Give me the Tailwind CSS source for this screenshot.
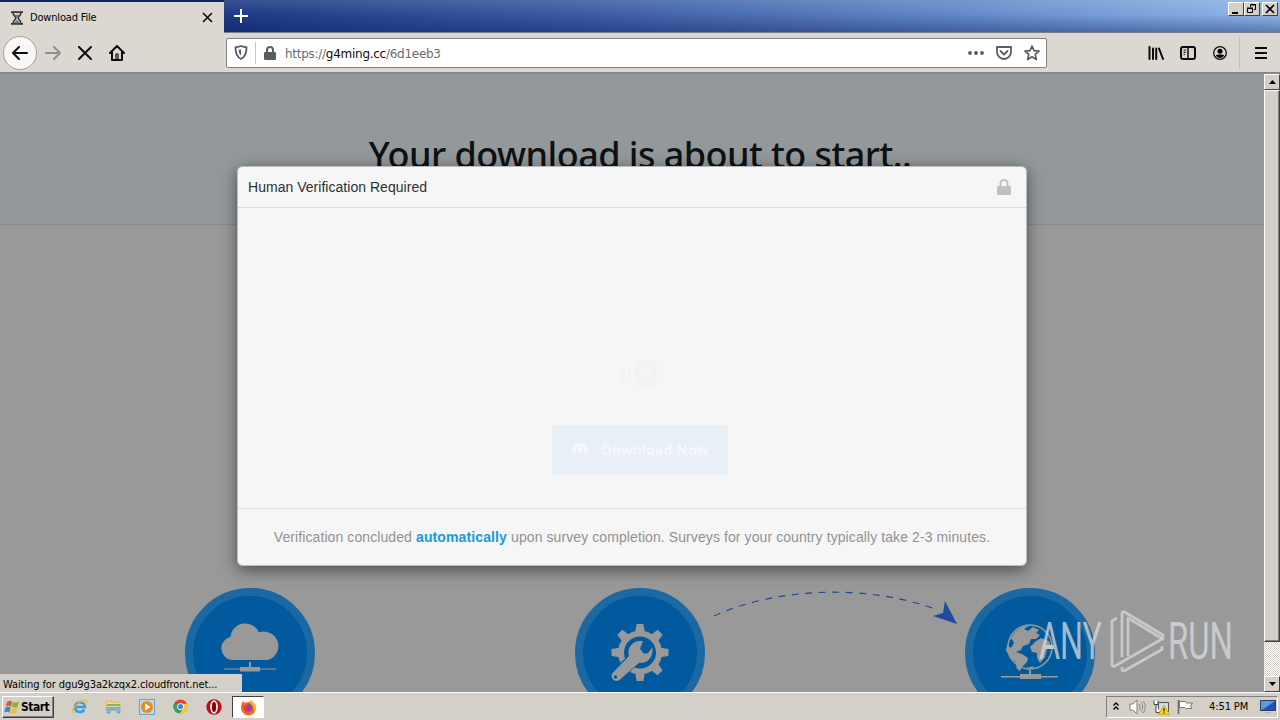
<!DOCTYPE html>
<html lang="en">
<head>
    <meta charset="UTF-8">
    <meta name="viewport" content="width=device-width, initial-scale=1.0">
    <title>Download File</title>
    <script src="https://cdn.jsdelivr.net/npm/@tailwindcss/browser@4"></script>
</head>
<body class="w-[1280px] h-[720px] overflow-hidden flex flex-col bg-[#d4d0c8] font-['DejaVu_Sans_Condensed','DejaVu_Sans',sans-serif] text-[11px] text-black">

    <!-- Tab strip -->
    <header class="h-[33px] shrink-0 flex items-start border-b border-[#7d7f88] bg-[linear-gradient(to_bottom,rgba(255,255,255,0.12),rgba(255,255,255,0)_45%,rgba(10,25,90,0.38)),linear-gradient(to_right,#0a246a,#1f3d86_20%,#3a5ba2_45%,#6389c8_75%,#8fb6e8)]">
        <div class="w-[224px] h-[33px] border-t-2 border-[#0a246a] bg-[#dbd8d1] flex items-center pl-[10px] pr-[11px] shrink-0">
            <svg class="w-[14px] h-[14px]" viewBox="0 0 14 14" fill="none" stroke="#333">
                <path d="M1 1.2h12M1 12.8h12" stroke-width="1.8"/>
                <path d="M3 1.5c0 3 2.9 4 2.9 5.500S3 9.500 3 12.500M11 1.500c0 3-2.900 4-2.900 5.500S11 9.500 11 12.500" stroke-width="1.500"/>
                <path d="M5 4h4L7 7zM4.500 12L7 9l2.500 3z" fill="#777" stroke="#777" stroke-width=".5"/>
            </svg>
            <span class="ml-[6px] pt-[2px] grow whitespace-nowrap tracking-[-0.18px]">Download File</span>
            <svg class="w-[11px] h-[11px]" viewBox="0 0 11 11" stroke="#111" stroke-width="1.700"><path d="M1 1l9 9M10 1l-9 9"/></svg>
        </div>
        <svg class="w-[14px] h-[14px] mt-[9px] ml-[10px]" viewBox="0 0 14 14" stroke="#fff" stroke-width="2"><path d="M7 0v14M0 7h14"/></svg>
        <div class="grow"></div>
        <!-- Window buttons -->
        <div class="flex mt-[2px] mr-[2px]">
            <div class="w-[16px] h-[14px] bg-[#d4d0c8] border border-t-white border-l-white border-r-[#404040] border-b-[#404040]">
                <svg class="w-[14px] h-[12px]" viewBox="0 0 14 12"><path d="M3 9h6v2H3z"/></svg>
            </div>
            <div class="w-[16px] h-[14px] bg-[#d4d0c8] border border-t-white border-l-white border-r-[#404040] border-b-[#404040]">
                <svg class="w-[14px] h-[12px]" viewBox="0 0 14 12" fill="none" stroke="#000"><path d="M5.500 4V1.500h5v5H9M5 2h6M2.500 5.500h5v4h-5zM2 5h6"/></svg>
            </div>
            <div class="ml-[2px] w-[16px] h-[14px] bg-[#d4d0c8] border border-t-white border-l-white border-r-[#404040] border-b-[#404040]">
                <svg class="w-[14px] h-[12px]" viewBox="0 0 14 12" stroke="#000" stroke-width="1.600"><path d="M3 2l8 8M11 2l-8 8"/></svg>
            </div>
        </div>
    </header>

    <!-- Navigation toolbar -->
    <nav class="h-[41px] shrink-0 flex items-center bg-[#dbd8d1] border-b-2 border-[#85878a]">
        <div class="ml-[3px] w-[34px] h-[34px] rounded-full bg-[#f9f8f7] border border-[#a3a09b] flex items-center justify-center shrink-0">
            <svg class="w-[16px] h-[14px]" viewBox="0 0 16 14" fill="none" stroke="#0c0c0d" stroke-width="2" stroke-linecap="round" stroke-linejoin="round"><path d="M15 7H1M7 1L1 7l6 6"/></svg>
        </div>
        <svg class="ml-[8px] w-[16px] h-[14px]" viewBox="0 0 16 14" fill="none" stroke="#918f8b" stroke-width="2" stroke-linecap="round" stroke-linejoin="round"><path d="M1 7h14M9 1l6 6-6 6"/></svg>
        <svg class="ml-[17px] w-[14px] h-[14px]" viewBox="0 0 14 14" stroke="#0c0c0d" stroke-width="2" stroke-linecap="round"><path d="M1 1l12 12M13 1L1 13"/></svg>
        <svg class="ml-[17px] w-[16px] h-[16px]" viewBox="0 0 16 16" fill="none" stroke="#0c0c0d" stroke-width="2" stroke-linecap="round" stroke-linejoin="round"><path d="M1 8l7-7 7 7M3 7v8h10V7"/><path d="M7 9h2v6H7z" stroke-width="1.200"/></svg>

        <!-- Address bar -->
        <div class="ml-[101px] w-[821px] h-[30px] bg-white border border-[#85837e] rounded-[2px] flex items-center shrink-0">
            <svg class="ml-[7px] w-[14px] h-[15px]" viewBox="0 0 14 15" fill="none" stroke="#5c5c5e" stroke-width="1.800" stroke-linejoin="round"><path d="M7 1c2 .8 4 1.200 5.500 1.200C12.700 8 11 12 7 14 3 12 1.300 8 1.500 2.200 3 2.200 5 1.800 7 1z"/><path d="M7 4.500v6c-1.500-1-2.300-3-2.400-5.500z" fill="#5c5c5e" stroke="none"/></svg>
            <div class="ml-[7px] w-px h-[22px] bg-[#c9c9c9]"></div>
            <svg class="ml-[8px] w-[12px] h-[14px]" viewBox="0 0 12 14"><path d="M3 7V4a3 3 0 0 1 6 0v3" fill="none" stroke="#5c5c5e" stroke-width="2"/><rect y="6" width="12" height="8" rx="1.200" fill="#5c5c5e"/></svg>
            <div class="ml-[9px] pt-[2px] grow whitespace-nowrap font-['DejaVu_Sans',sans-serif] text-[12px] tracking-[-0.27px] text-[#6b6b6d]">https://<span class="text-[#0c0c0d]">g4ming.cc</span>/6d1eeb3</div>
            <svg class="w-[16px] h-[4px]" viewBox="0 0 16 4" fill="#5c5c5e"><circle cx="2" cy="2" r="1.900"/><circle cx="8" cy="2" r="1.900"/><circle cx="14" cy="2" r="1.900"/></svg>
            <svg class="ml-[12px] w-[16px] h-[14px]" viewBox="0 0 16 14" fill="none" stroke="#5c5c5e" stroke-width="1.800" stroke-linecap="round" stroke-linejoin="round"><path d="M1 1h14v5a7 7 0 0 1-14 0z"/><path d="M4.500 5L8 8.500 11.500 5"/></svg>
            <svg class="ml-[12px] mr-[6px] w-[16px] h-[16px]" viewBox="0 0 16 16" fill="none" stroke="#5c5c5e" stroke-width="1.700" stroke-linejoin="round"><path d="M8 1l2 4.600 5 .5-3.800 3.300 1.200 5L8 11.800l-4.400 2.600 1.200-5L1 6.100l5-.5z"/></svg>
        </div>

        <svg class="ml-[101px] w-[16px] h-[14px]" viewBox="0 0 16 14" stroke="#0c0c0d" stroke-width="2" stroke-linecap="round"><path d="M1.500 1v12M5 2.500V13M8.200 2.500V13M11 2.500L15 13"/></svg>
        <svg class="ml-[16px] w-[16px] h-[14px]" viewBox="0 0 16 14" fill="none" stroke="#0c0c0d"><rect x="1" y="1" width="14" height="12" rx="2" stroke-width="2"/><path d="M8 1v12" stroke-width="1.500"/><path d="M3.500 4h2.500M3.500 6.200h2.500M3.500 8.400H5"/></svg>
        <svg class="ml-[17px] w-[14px] h-[14px]" viewBox="0 0 14 14"><circle cx="7" cy="7" r="6.300" fill="none" stroke="#0c0c0d" stroke-width="1.300"/><circle cx="7" cy="5.300" r="2.500"/><path d="M2.800 9.500c1-1.300 7.400-1.300 8.400 0-1.800 3.200-6.600 3.200-8.400 0z"/></svg>
        <div class="ml-[12px] w-px h-[32px] bg-[#c3c0ba]"></div>
        <svg class="ml-[15px] w-[12px] h-[12px]" viewBox="0 0 12 12" stroke="#0c0c0d" stroke-width="2"><path d="M0 1h12M0 6h12M0 11h12"/></svg>
    </nav>

    <!-- Browser content -->
    <main class="h-[618px] shrink-0 flex relative overflow-hidden">
        <div class="w-[1264px] bg-[#999999] overflow-hidden">
            <!-- Hero -->
            <div class="h-[151px] bg-[#93989b] border-b border-[#868a8c] pt-[56px] pl-[16px] text-center font-['Noto_Sans',sans-serif] text-[36px] leading-[50px] font-medium text-[#0d1114]">
                <h1 class="whitespace-nowrap tracking-[-0.55px]">Your download is about to start..</h1>
            </div>

            <!-- Steps -->
            <div class="mt-[363px] ml-[55px] w-[1170px] grid grid-cols-3 justify-items-center">
                <div class="w-[130px] h-[130px] rounded-full bg-[#005a9d] border-8 border-[#1b68a2]">
                    <svg class="w-[114px] h-[114px]" viewBox="0 0 114 114" fill="#999">
                        <path d="M40 64a11.500 11.500 0 0 1-1-22.400 13.500 13.500 0 0 1 26-4.400A13.300 13.300 0 1 1 73 64z" transform="translate(-5 -2.500) scale(1.09 1.04)"/>
                        <path d="M56 66h2v5h9v1.500h16v1H67v2H47v-2H31v-1h16V71h9z"/>
                    </svg>
                </div>
                <div class="w-[130px] h-[130px] rounded-full bg-[#005a9d] border-8 border-[#1b68a2]">
                    <svg class="w-[114px] h-[114px]" viewBox="0 0 114 114">
                        <g fill="#999">
                            <circle cx="57" cy="56.500" r="22"/>
                            <path id="tooth" d="M53.500 28h7l1.500 10H52z"/>
                            <use href="#tooth" transform="rotate(45 57 56.500)"/>
                            <use href="#tooth" transform="rotate(90 57 56.500)"/>
                            <use href="#tooth" transform="rotate(135 57 56.500)"/>
                            <use href="#tooth" transform="rotate(180 57 56.500)"/>
                            <use href="#tooth" transform="rotate(270 57 56.500)"/>
                            <use href="#tooth" transform="rotate(315 57 56.500)"/>
                        </g>
                        <circle cx="57" cy="56.500" r="16" fill="#005a9d"/>
                        <path d="M52 62L32 81" stroke="#005a9d" stroke-width="13"/>
                        <path d="M60 45.500l-3 7 3.500 5 4 0 5-6c1 9-5 17-13 15L37 83.500c-4 4-11-1-7.500-6.500L46 60c-3-8 5-17 14-14.500z" fill="#999"/>
                        <circle cx="32.500" cy="81" r="1.700" fill="#005a9d"/>
                    </svg>
                </div>
                <div class="w-[130px] h-[130px] rounded-full bg-[#005a9d] border-8 border-[#1b68a2]">
                    <svg class="w-[114px] h-[114px]" viewBox="0 0 114 114" fill="#999">
                        <circle cx="57" cy="51" r="22" fill="none" stroke="#999" stroke-width="1.500"/>
                        <path d="M37 44c4-9 11-14 19-14l-5 3 4 2 5-4 6 3-3 3 4 2-4 4-5 0-2 5-6 2-2 4-5 2 6 2 6 4-1 4-5 5-2 4-3-2-2-8-5-3-4-8 1-5 4 3 3-5-2-4z"/>
                        <path d="M62 46l6-4 8 3 3 8-5 0-2 8-5 6-3-5 0-5-5-1-2-5zM53 72l8-2-2 3z"/>
                        <path d="M56 74h2v4h10v2h17v1.500H68V83H47v-1.500H28V80h19v-2h9z"/>
                    </svg>
                </div>
            </div>
        </div>

        <!-- Dashed arrow between steps -->
        <svg class="absolute left-[710px] top-[510px] w-[250px] h-[50px]" viewBox="0 0 250 50">
            <path d="M4 32C64 4 156-1 228 26" fill="none" stroke="#1f4691" stroke-width="1.100" stroke-dasharray="7 6.500"/>
            <path d="M235 17l12 23-24-8 10-3z" fill="#1e4b9c"/>
        </svg>

        <!-- Scrollbar -->
        <div class="w-[16px] flex flex-col bg-[repeating-conic-gradient(#ffffff_0_25%,#d4d0c8_0_50%)] bg-[length:2px_2px]">
            <div class="h-[16px] shrink-0 bg-[#d4d0c8] border border-t-white border-l-white border-r-[#404040] border-b-[#404040] flex items-center justify-center">
                <svg class="w-[7px] h-[4px]" viewBox="0 0 7 4"><path d="M3.500 0L7 4H0z"/></svg>
            </div>
            <div class="h-[552px] shrink-0 bg-[#d4d0c8] border border-t-white border-l-white border-r-[#404040] border-b-[#404040] shadow-[inset_-1px_-1px_#808080]"></div>
            <div class="grow"></div>
            <div class="h-[16px] shrink-0 bg-[#d4d0c8] border border-t-white border-l-white border-r-[#404040] border-b-[#404040] flex items-center justify-center">
                <svg class="w-[7px] h-[4px]" viewBox="0 0 7 4"><path d="M3.500 4L7 0H0z"/></svg>
            </div>
        </div>

        <!-- Verification dialog -->
        <section class="absolute left-[237px] top-[92px] w-[790px] h-[400px] rounded-[5px] bg-[#f6f6f6] border border-[#b9babb] bg-clip-padding shadow-[0_4px_16px_rgba(0,0,0,0.5)] flex flex-col font-['Liberation_Sans',sans-serif]">
            <div class="h-[41px] shrink-0 border-b border-[#dcdcdc] flex items-center justify-between pl-[10px] pr-[15px]">
                <h2 class="text-[14px] tracking-[0.03px] text-[#303030]">Human Verification Required</h2>
                <svg class="w-[14px] h-[16px]" viewBox="0 0 14 16"><path d="M3.500 8V4.500a3.500 3.500 0 0 1 7 0V8" fill="none" stroke="#c1c1c1" stroke-width="2"/><rect y="7" width="14" height="9" rx="1" fill="#c1c1c1"/></svg>
            </div>
            <div class="grow flex flex-col items-center pl-[15px]">
                <svg class="mt-[150px] w-[50px] h-[34px]" viewBox="0 0 50 34"><g fill="#f3f3f3"><path d="M2 24l6-14h3v14zM13 10h3v14h-3zM44 8h3v16h-3z"/><rect x="19" y="3" width="24" height="27" rx="8"/></g><rect x="26" y="11" width="9" height="9" rx="3" fill="#f6f6f6"/></svg>
                <div class="mt-[33px] w-[176px] h-[50px] bg-[#e8eff7] flex items-center pl-[20px] pb-[2px] text-[#f6f8fb] font-['Noto_Sans',sans-serif] text-[14px] font-semibold">
                    <svg class="w-[16px] h-[12px]" viewBox="0 0 16 12" fill="none" stroke="#f6f8fb" stroke-width="3"><path d="M4 10H2V7l2-5h8l2 5v3h-2M6 5l2 3 2-3"/></svg>
                    <span class="ml-[14px] whitespace-nowrap tracking-[0.3px]">Download Now</span>
                </div>
            </div>
            <div class="h-[57px] shrink-0 border-t border-[#dcdcdc] flex items-center justify-center pt-px">
                <p class="whitespace-nowrap text-[14px] tracking-[0.09px] text-[#929292]">Verification concluded <b class="text-[#159bdf] tracking-[0.12px]">automatically</b> upon survey completion. Surveys for your country typically take 2-3 minutes.</p>
            </div>
        </section>

        <!-- Status text -->
        <div class="absolute left-0 bottom-0 w-[242px] h-[18px] bg-[#d4d0c8] pl-[3px] leading-[21px] whitespace-nowrap tracking-[-0.1px]">Waiting for dgu9g3a2kzqx2.cloudfront.net...</div>

        <!-- Watermark -->
        <svg class="absolute left-[1030px] top-[526px] w-[230px] h-[80px]" viewBox="0 0 230 80">
            <g fill="#d9dbdd" fill-opacity=".75" font-family="Roboto, sans-serif" font-weight="400" font-size="51">
                <text x="9" y="59" textLength="63" lengthAdjust="spacingAndGlyphs">ANY</text>
                <text x="138" y="59" textLength="65" lengthAdjust="spacingAndGlyphs">RUN</text>
            </g>
            <g fill="none" stroke="#d9dbdd" stroke-opacity=".7" stroke-width="2.800" stroke-linejoin="round">
                <path d="M92 57V13.500q0-2.500 2.500-1.500L133 35v4L98 18v38"/>
                <path d="M87 18l-5 3v44.500l2 1L132 39M92 67v3l2 1L132 49.500V46"/>
            </g>
        </svg>
    </main>

    <!-- Taskbar -->
    <footer class="h-[28px] shrink-0 bg-[#d4d0c8] border-t border-white flex items-center">
        <div class="ml-[2px] mt-[1px] w-[52px] h-[22px] border border-t-white border-l-white border-r-[#404040] border-b-[#404040] shadow-[inset_-1px_-1px_#808080] flex items-center pl-[1px] shrink-0">
            <svg class="w-[16px] h-[16px]" viewBox="0 0 16 16">
                <path d="M3 3c2-1.500 3.500-1.500 5.300-.5L7 7.500C5.200 6.500 3.500 6.600 1.700 7.800z" fill="#e2592b"/>
                <path d="M9 3c2 1 3.800.8 6-.5L13.500 7.700c-2 1.200-3.800 1-5.700 0z" fill="#7db542"/>
                <path d="M1.500 8.700C3.300 7.500 5 7.500 6.700 8.500L5.300 13.500C3.500 12.500 1.900 12.600 0 13.800z" fill="#3d84c9"/>
                <path d="M7.500 8.900c2 1 3.800 1 5.700-.2L11.800 14c-2 1.200-3.700 1-5.700 0z" fill="#f5be2c"/>
            </svg>
            <span class="ml-[1px] font-bold text-[12px] tracking-[-0.5px]">Start</span>
        </div>
        <!-- Quick launch -->
        <svg class="ml-[17px] w-[17px] h-[17px]" viewBox="0 0 17 17" fill="none"><path d="M4 9h10c0-6-9.500-6-10 0-.3 5.500 7 6.500 9.300 2.500" stroke="#3a9edb" stroke-width="2.600"/><path d="M2 15C-1 12 10 1 15 2c1.500.5 1 2 0 3" stroke="#e9b93b" stroke-width="1.300"/></svg>
        <svg class="ml-[17px] w-[17px] h-[16px]" viewBox="0 0 17 16"><path d="M1 2h5l1 1h8v8H1z" fill="#f2d77b" stroke="#d3ae52" stroke-width=".7"/><path d="M2 5h13v2H2z" fill="#75b979"/><path d="M2 14V8.500h13V14h-3v-3H5v3z" fill="#78bce4" stroke="#4a96c6" stroke-width=".6"/></svg>
        <svg class="ml-[17px] w-[16px] h-[16px]" viewBox="0 0 16 16"><rect x=".5" y=".5" width="15" height="15" fill="#b9d9f3" stroke="#6aa4d6"/><circle cx="8" cy="8" r="6" fill="#f08a1d"/><path d="M6 4.500v7L11.500 8z" fill="#fff"/></svg>
        <svg class="ml-[18px] w-[15px] h-[15px]" viewBox="0 0 16 16"><circle cx="8" cy="8" r="7.500" fill="#e04334"/><path d="M8 8L1.500 4.250A7.500 7.500 0 0 0 7 15.500L11.500 10z" fill="#35a552"/><path d="M8 5h7a7.500 7.500 0 0 1-8 10.500L11 10z" fill="#f9c931"/><circle cx="8" cy="8" r="3.600" fill="#fff"/><circle cx="8" cy="8" r="2.800" fill="#4285e8"/></svg>
        <svg class="ml-[18px] w-[16px] h-[16px]" viewBox="0 0 16 16"><circle cx="8" cy="8" r="7.700" fill="#b31217"/><ellipse cx="8" cy="8" rx="3" ry="5.800" fill="none" stroke="#f4e6e6" stroke-width="1.800"/><ellipse cx="8" cy="8" rx="1.800" ry="4.800" fill="#7d080c"/></svg>
        <div class="ml-[10px] mt-[1px] w-[32px] h-[22px] bg-white border border-t-[#404040] border-l-[#404040] border-r-white border-b-white flex items-center justify-center shrink-0">
            <svg class="w-[17px] h-[17px]" viewBox="0 0 17 17"><path d="M2 4l1-2 2 2c2-1.500 4-1 5-1l1-2c1 2 5 3 5 8a7.500 7.500 0 0 1-15 0c0-2 .3-3.500 1-5z" fill="#f5692b"/><path d="M11 1c1 2 5 3 5 8a7.500 7.500 0 0 1-2 5c1-5-1-8-4-10z" fill="#fbbf2d"/><circle cx="8.500" cy="9" r="3.700" fill="#7a47c4"/><path d="M3 7c2-1 4 0 6 0-1 2-3 1-3 3s4 2 5 1c-1 4-8 4-8-4z" fill="#ee4035"/></svg>
        </div>
        <div class="grow"></div>
        <!-- Tray -->
        <div class="mt-[1px] mr-[2px] w-[172px] h-[22px] border border-t-[#808080] border-l-[#808080] border-r-white border-b-white flex items-center shrink-0">
            <svg class="ml-[6px] mb-[3px] w-[6px] h-[8px]" viewBox="0 0 6 8" fill="none" stroke="#000" stroke-width="1.300"><path d="M.5 3.500L3 1l2.500 2.500M.5 7.500L3 5l2.500 2.500"/></svg>
            <svg class="ml-[10px] w-[17px] h-[16px]" viewBox="0 0 17 16" fill="none" stroke="#7f7f7f"><path d="M1 5h3l4-4v14l-4-4H1z" fill="#fff"/><path d="M10 5c1.500 2 1.500 4 0 6M12 3.500c2.300 3 2.300 6 0 9M14 2c3 4 3 8 0 12" stroke="#888"/></svg>
            <svg class="ml-[7px] w-[17px] h-[16px]" viewBox="0 0 17 16"><path d="M5.500 3.500h10v9h-10z" fill="#d5dade" stroke="#555"/><path d="M1 1.500v4h4v-4M3 5.500v8h4" fill="#fff" stroke="#444"/><path d="M11 6l5.500 9.500h-11z" fill="#f8d21c" stroke="#c69c0c" stroke-width=".6"/><path d="M11 9v3.500M11 13.500v1" stroke="#222" stroke-width="1.200"/></svg>
            <svg class="ml-[7px] w-[17px] h-[16px]" viewBox="0 0 17 16"><path d="M1.500 1v14" stroke="#666" stroke-width="1.600"/><path d="M2.500 2.500h6l1 1.500h6l-2 3 1.500 2.500h-6L8 8.500H2.500z" fill="#fff" stroke="#777"/></svg>
            <span class="ml-[15px] pt-px whitespace-nowrap tracking-[-0.1px]">4:51 PM</span>
            <div class="grow"></div>
            <svg class="mr-[1px] w-[16px] h-[14px]" viewBox="0 0 16 14"><path d="M.5.500h15v10H.5z" fill="#1d56b4" stroke="#2c3e5c"/><path d="M1 1h14L5 8 1 10z" fill="#5e9ae2"/><path d="M5 12h6v1.500H5z" fill="#b4b8bf"/></svg>
        </div>
    </footer>
</body>
</html>
